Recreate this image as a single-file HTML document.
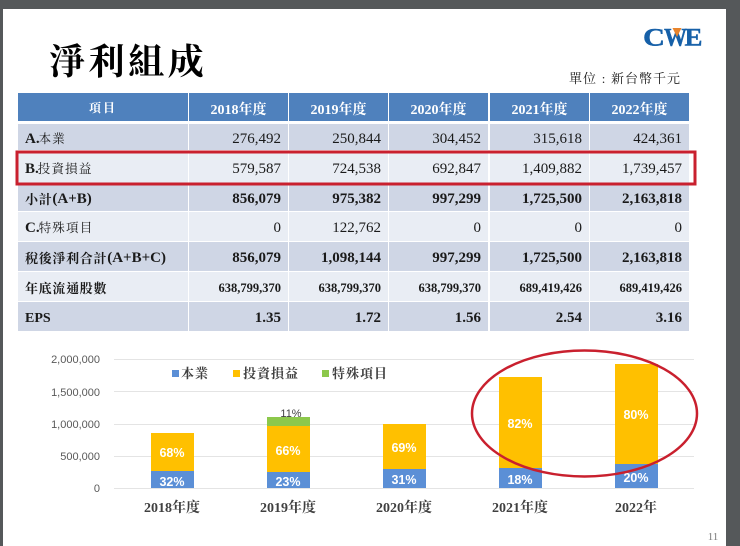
<!DOCTYPE html>
<html lang="zh-Hant"><head><meta charset="utf-8">
<style>
html,body{margin:0;padding:0;background:#55585a;}
#p{position:relative;width:740px;height:546px;overflow:hidden;background:#55585a;font-family:"Liberation Serif","Noto Serif CJK SC",serif;color:#1a1a1a;filter:blur(.3px);}
#s{position:absolute;left:3px;top:9px;width:723px;height:537px;background:#fff;}
.c{position:absolute;box-sizing:border-box;white-space:nowrap;display:flex;align-items:center;padding-top:4px;}
.r{justify-content:flex-end;padding-right:7px;font-size:15px;}
.l{padding-left:7px;font-size:15px;}
.l i{font-style:normal;font-size:12.5px;letter-spacing:1.2px;position:relative;top:-1.5px;margin-left:-1px;}
.l.b i{font-size:13px;letter-spacing:.7px;margin-left:0;}
.h{justify-content:center;background:#4f81bd;color:#fff;font-weight:bold;font-size:14px;top:93px;height:28px;}
.b{font-weight:bold;}
.d{background:#cfd6e5;}.e{background:#e9edf4;}
.s{font-size:12.5px;}
</style></head><body><div id="p"><div id="s"></div>
<div style="position:absolute;left:49px;top:37px;font-size:36px;line-height:50px;font-weight:bold;letter-spacing:3.6px;color:#000;white-space:nowrap;">淨利組成</div>
<div style="position:absolute;left:569px;top:70px;font-size:13px;line-height:18px;letter-spacing:1px;white-space:nowrap;">單位<span style="display:inline-block;width:14px;text-align:center;">:</span>新台幣千元</div>
<svg style="position:absolute;left:640px;top:26px" width="66" height="24" viewBox="0 0 66 24"><g font-family="Liberation Serif" font-weight="bold" font-size="25" fill="#1660a8" stroke="#1660a8" stroke-width=".4"><text x="3" y="19.5" textLength="22" lengthAdjust="spacingAndGlyphs">C</text><text x="24" y="19.5" textLength="23" lengthAdjust="spacingAndGlyphs">W</text><text x="44.5" y="19.5" textLength="18" lengthAdjust="spacingAndGlyphs">E</text></g><path d="M32.5 2h9l-4.5 9z" fill="#e8842c"/></svg>

<div class="c h" style="left:18px;width:170px;font-size:12px;letter-spacing:2px;padding-top:1px;">項目</div>
<div class="c h" style="left:189px;width:99px;">2018年度</div>
<div class="c h" style="left:289px;width:99px;">2019年度</div>
<div class="c h" style="left:389px;width:99px;">2020年度</div>
<div class="c h" style="left:490px;width:99px;">2021年度</div>
<div class="c h" style="left:590px;width:99px;">2022年度</div>

<div class="c l d" style="left:18px;top:124px;width:170px;height:26px;"><b>A.</b><i>本業</i></div>
<div class="c r d" style="left:189px;top:124px;width:99px;height:26px;">276,492</div>
<div class="c r d" style="left:289px;top:124px;width:99px;height:26px;">250,844</div>
<div class="c r d" style="left:389px;top:124px;width:99px;height:26px;">304,452</div>
<div class="c r d" style="left:490px;top:124px;width:99px;height:26px;">315,618</div>
<div class="c r d" style="left:590px;top:124px;width:99px;height:26px;">424,361</div>

<div class="c l e" style="left:18px;top:151px;width:170px;height:33px;"><b>B.</b><i>投資損益</i></div>
<div class="c r e" style="left:189px;top:151px;width:99px;height:33px;">579,587</div>
<div class="c r e" style="left:289px;top:151px;width:99px;height:33px;">724,538</div>
<div class="c r e" style="left:389px;top:151px;width:99px;height:33px;">692,847</div>
<div class="c r e" style="left:490px;top:151px;width:99px;height:33px;">1,409,882</div>
<div class="c r e" style="left:590px;top:151px;width:99px;height:33px;">1,739,457</div>

<div class="c l d b" style="left:18px;top:184px;width:170px;height:27px;"><i>小計</i>(A+B)</div>
<div class="c r d b" style="left:189px;top:184px;width:99px;height:27px;">856,079</div>
<div class="c r d b" style="left:289px;top:184px;width:99px;height:27px;">975,382</div>
<div class="c r d b" style="left:389px;top:184px;width:99px;height:27px;">997,299</div>
<div class="c r d b" style="left:490px;top:184px;width:99px;height:27px;">1,725,500</div>
<div class="c r d b" style="left:590px;top:184px;width:99px;height:27px;">2,163,818</div>

<div class="c l e" style="left:18px;top:212px;width:170px;height:29px;"><b>C.</b><i>特殊項目</i></div>
<div class="c r e" style="left:189px;top:212px;width:99px;height:29px;">0</div>
<div class="c r e" style="left:289px;top:212px;width:99px;height:29px;">122,762</div>
<div class="c r e" style="left:389px;top:212px;width:99px;height:29px;">0</div>
<div class="c r e" style="left:490px;top:212px;width:99px;height:29px;">0</div>
<div class="c r e" style="left:590px;top:212px;width:99px;height:29px;">0</div>

<div class="c l d b" style="left:18px;top:242px;width:170px;height:29px;"><i>稅後淨利合計</i>(A+B+C)</div>
<div class="c r d b" style="left:189px;top:242px;width:99px;height:29px;">856,079</div>
<div class="c r d b" style="left:289px;top:242px;width:99px;height:29px;">1,098,144</div>
<div class="c r d b" style="left:389px;top:242px;width:99px;height:29px;">997,299</div>
<div class="c r d b" style="left:490px;top:242px;width:99px;height:29px;">1,725,500</div>
<div class="c r d b" style="left:590px;top:242px;width:99px;height:29px;">2,163,818</div>

<div class="c l e b" style="left:18px;top:272px;width:170px;height:29px;"><i>年底流通股數</i></div>
<div class="c r e b s" style="left:189px;top:272px;width:99px;height:29px;">638,799,370</div>
<div class="c r e b s" style="left:289px;top:272px;width:99px;height:29px;">638,799,370</div>
<div class="c r e b s" style="left:389px;top:272px;width:99px;height:29px;">638,799,370</div>
<div class="c r e b s" style="left:490px;top:272px;width:99px;height:29px;">689,419,426</div>
<div class="c r e b s" style="left:590px;top:272px;width:99px;height:29px;">689,419,426</div>

<div class="c l d b" style="left:18px;top:302px;width:170px;height:29px;font-size:14px;">EPS</div>
<div class="c r d b" style="left:189px;top:302px;width:99px;height:29px;">1.35</div>
<div class="c r d b" style="left:289px;top:302px;width:99px;height:29px;">1.72</div>
<div class="c r d b" style="left:389px;top:302px;width:99px;height:29px;">1.56</div>
<div class="c r d b" style="left:490px;top:302px;width:99px;height:29px;">2.54</div>
<div class="c r d b" style="left:590px;top:302px;width:99px;height:29px;">3.16</div>

<svg style="position:absolute;left:0;top:0" width="740" height="546" viewBox="0 0 740 546">
<rect x="17" y="152" width="678" height="32" fill="none" stroke="#c9202e" stroke-width="3"/>
<g stroke="#e4e4e4" stroke-width="1"><path d="M114 359.5H694M114 391.5H694M114 424.5H694M114 456.5H694M114 488.5H694"/></g>
<g font-family="Liberation Sans" font-size="11" fill="#595959" text-anchor="end">
<text x="100" y="363">2,000,000</text><text x="100" y="396">1,500,000</text><text x="100" y="428">1,000,000</text><text x="100" y="460">500,000</text><text x="100" y="492">0</text></g>
<rect x="151" y="433" width="43" height="38" fill="#ffc000"/><rect x="151" y="471" width="43" height="17" fill="#5b8fd6"/>
<rect x="267" y="417" width="43" height="9" fill="#8cc84b"/><rect x="267" y="426" width="43" height="46" fill="#ffc000"/><rect x="267" y="472" width="43" height="16" fill="#5b8fd6"/>
<rect x="383" y="424" width="43" height="45" fill="#ffc000"/><rect x="383" y="469" width="43" height="19" fill="#5b8fd6"/>
<rect x="499" y="377" width="43" height="91" fill="#ffc000"/><rect x="499" y="468" width="43" height="20" fill="#5b8fd6"/>
<rect x="615" y="364" width="43" height="100" fill="#ffc000"/><rect x="615" y="464" width="43" height="24" fill="#5b8fd6"/>
<g font-family="Liberation Sans" font-size="12.5" font-weight="bold" fill="#fff" text-anchor="middle">
<text x="172" y="457">68%</text><text x="172" y="486">32%</text>
<text x="288" y="455">66%</text><text x="288" y="486">23%</text>
<text x="404" y="452">69%</text><text x="404" y="484">31%</text>
<text x="520" y="428">82%</text><text x="520" y="484">18%</text>
<text x="636" y="419">80%</text><text x="636" y="482">20%</text></g>
<text x="291" y="417" font-family="Liberation Sans" font-size="11" fill="#404040" text-anchor="middle">11%</text>
<rect x="172" y="370" width="7" height="7" fill="#5b8fd6"/><rect x="233" y="370" width="7" height="7" fill="#ffc000"/><rect x="322" y="370" width="7" height="7" fill="#8cc84b"/>
<g font-family="Liberation Serif,Noto Serif CJK SC,serif" font-size="13" font-weight="bold" fill="#404040" letter-spacing="1">
<text x="181" y="378">本業</text><text x="243" y="378">投資損益</text><text x="332" y="378">特殊項目</text></g>
<g font-family="Liberation Serif,Noto Serif CJK SC,serif" font-size="14" font-weight="bold" fill="#404040" text-anchor="middle">
<text x="172" y="512">2018年度</text><text x="288" y="512">2019年度</text><text x="404" y="512">2020年度</text><text x="520" y="512">2021年度</text><text x="636" y="512">2022年</text></g>
<ellipse cx="584.5" cy="413.5" rx="112.5" ry="63" fill="none" stroke="#c9202e" stroke-width="2.5"/>
<text x="713" y="540" font-family="Liberation Serif" font-size="11" fill="#7a7a7a" text-anchor="middle">11</text>
</svg>
</div></body></html>
